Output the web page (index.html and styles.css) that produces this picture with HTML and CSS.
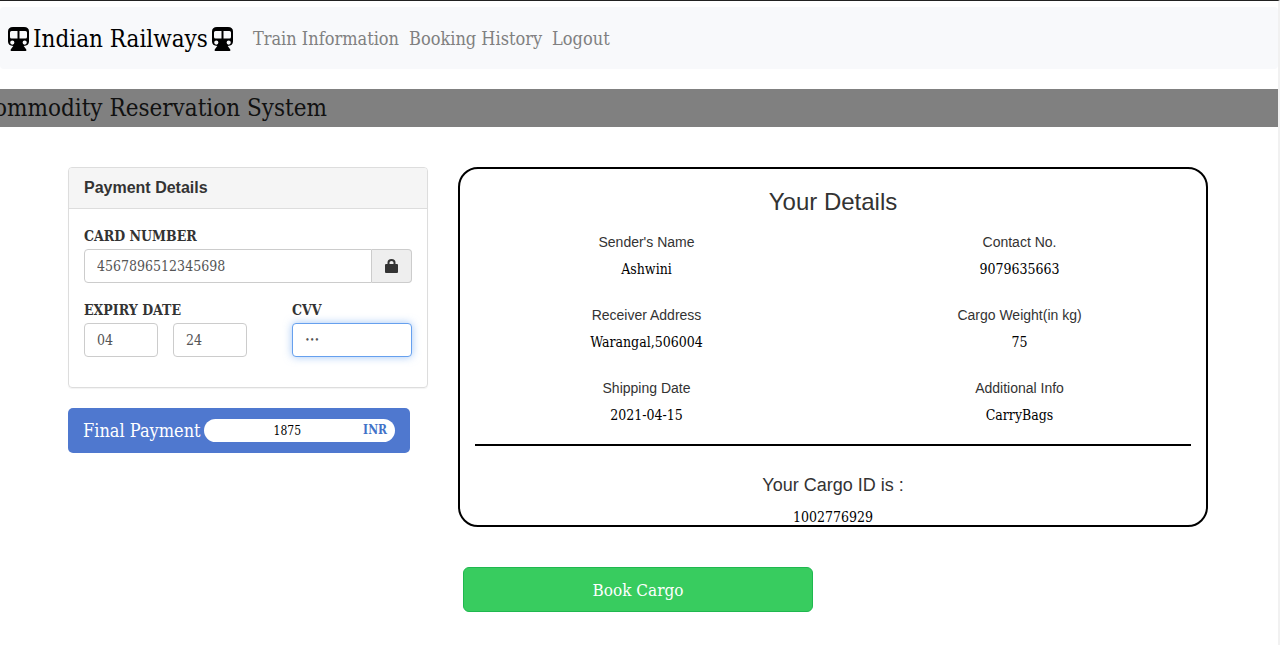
FILE: index.html
```html
<!DOCTYPE html>
<html lang="en">
<head>
<meta charset="utf-8">
<title>Indian Railways - Commodity Reservation</title>
<link rel="stylesheet" href="styles.css">
</head>
<body>
<svg class="sprite" aria-hidden="true">
  <symbol id="train" viewBox="0 0 21 24">
    <path fill-rule="evenodd" d="M5 0H16Q21 0 21 4.500V14.500Q21 18.600 15.700 19L18.300 22.500Q18.800 24 17.500 24H3.500Q2.200 24 2.700 22.500L5.300 19Q0 18.600 0 14.500V4.500Q0 0 5 0ZM3.500 4Q2 4 2 5.500V10Q2 11.500 3.500 11.500H9.500V4ZM11.500 4V11.500H17.500Q19 11.500 19 10V5.500Q19 4 17.500 4ZM4.300 13.500A2.100 2.100 0 1 0 4.300 17.700A2.100 2.100 0 1 0 4.300 13.500ZM16.700 13.500A2.100 2.100 0 1 0 16.700 17.700A2.100 2.100 0 1 0 16.700 13.500Z"/>
  </symbol>
</svg>
<nav class="navbar">
  <a class="brand" href="#"><svg class="train"><use href="#train"/></svg><span>Indian Railways</span><svg class="train"><use href="#train"/></svg></a>
  <div class="links">
    <a href="#">Train Information</a>
    <a href="#">Booking History</a>
    <a href="#">Logout</a>
  </div>
</nav>
<div class="banner"><div class="ticker"><span>Commodity Reservation System</span></div></div>
<main class="container">
  <div class="payment">
    <section class="panel">
      <h1 class="panel-title">Payment Details</h1>
      <form class="panel-body">
        <div class="field">
          <label for="card">CARD NUMBER</label>
          <div class="input-group">
            <input class="control" id="card" type="text" value="4567896512345698">
            <span class="addon"><svg class="lock" viewBox="0 0 13 14"><path fill-rule="evenodd" d="M2.500 5V3.500Q2.500 0 6.500 0Q10.500 0 10.500 3.500V5H12Q13 5 13 6V13Q13 14 12 14H1Q0 14 0 13V6Q0 5 1 5ZM4.500 5H8.500V3.500Q8.500 2 6.500 2Q4.500 2 4.500 3.500Z"/></svg></span>
          </div>
        </div>
        <div class="field-row">
          <div class="field">
            <label for="month">EXPIRY DATE</label>
            <div class="expiry">
              <input class="control" id="month" type="text" value="04">
              <input class="control" type="text" value="24" aria-label="Expiry year">
            </div>
          </div>
          <div class="field">
            <label for="cvv">CVV</label>
            <input class="control active" id="cvv" type="password" value="123">
          </div>
        </div>
      </form>
    </section>
    <div class="total">
      <label for="amount">Final Payment</label>
      <div class="badge"><input id="amount" type="text" value="1875" readonly><b>INR</b></div>
    </div>
  </div>
  <div class="summary">
    <section class="details">
      <h2>Your Details</h2>
      <dl class="facts">
        <div><dt>Sender's Name</dt><dd>Ashwini</dd></div>
        <div><dt>Contact No.</dt><dd>9079635663</dd></div>
        <div><dt>Receiver Address</dt><dd>Warangal,506004</dd></div>
        <div><dt>Cargo Weight(in kg)</dt><dd>75</dd></div>
        <div><dt>Shipping Date</dt><dd>2021-04-15</dd></div>
        <div><dt>Additional Info</dt><dd>CarryBags</dd></div>
      </dl>
      <hr>
      <h3>Your Cargo ID is :</h3>
      <p class="cargo-id">1002776929</p>
    </section>
    <button class="book" type="button">Book Cargo</button>
  </div>
</main>
</body>
</html>
```
FILE: styles.css
```css
* { box-sizing: border-box; }
:root { --slab: "DejaVu Serif Condensed", "DejaVu Serif", serif; }
body {
  margin: 0;
  min-height: 100vh;
  border-top: 1px solid #212121;
  border-right: 2px solid #f1f1f1;
  background: #fff;
  color: #333;
  font: 14px/20px "Liberation Sans", Arial, sans-serif;
}
h1, h2, h3, p, dl, dd { margin: 0; font-weight: 400; }
input, button { font-family: var(--slab); }
.sprite { display: none; }
.navbar {
  display: flex;
  align-items: center;
  gap: 20px;
  min-height: 62px;
  margin-top: 6px;
  padding: 2px 8px 0;
  border-radius: 4px;
  background: #f8f9fb;
  font-family: var(--slab);
}
.navbar a { text-decoration: none; white-space: nowrap; }
.brand { display: flex; align-items: center; gap: 4px; color: #000; font-size: 24px; line-height: 32px; }
.train { width: 21px; height: 24px; }
.links { display: flex; gap: 10px; font-size: 18px; line-height: 24px; }
.links a { color: #808080; }
.banner { margin-top: 20px; background: #808080; }
.ticker {
  display: flex;
  justify-content: flex-end;
  width: 327px;
  overflow: hidden;
  color: #111;
  font: 24px/38px var(--slab);
  white-space: nowrap;
}
.container {
  display: grid;
  grid-template-columns: 12fr 25fr;
  gap: 30px;
  max-width: 1172px;
  margin: 40px auto 0;
  padding: 0 17px 32px 15px;
}
.panel { border: 1px solid #ddd; border-radius: 4px; box-shadow: 0 1px 1px rgba(0, 0, 0, .05); }
.panel-title {
  padding: 10px 15px;
  border-bottom: 1px solid #ddd;
  border-radius: 3px 3px 0 0;
  background: #f5f5f5;
  font-size: 16px;
  font-weight: 700;
}
.panel-body { padding: 17px 15px 30px; }
.field label { display: block; margin-bottom: 3px; font: 700 14px/20px var(--slab); }
.field-row { display: grid; grid-template-columns: 163fr 120fr; gap: 45px; margin-top: 17px; }
.expiry { display: grid; grid-template-columns: 1fr 1fr; gap: 15px; }
.control {
  display: block;
  width: 100%;
  min-width: 0;
  height: 34px;
  padding: 6px 12px;
  border: 1px solid #ccc;
  border-radius: 4px;
  outline: 0;
  background: #fff;
  color: #555;
  font-size: 14px;
}
.active { border-color: #66a0ee; box-shadow: 0 0 8px rgba(102, 160, 238, .6); font-size: 9px; }
.input-group { display: flex; }
.input-group .control { border-radius: 4px 0 0 4px; }
.addon {
  display: flex;
  flex: 0 0 40px;
  align-items: center;
  justify-content: center;
  border: 1px solid #ccc;
  border-left: 0;
  border-radius: 0 4px 4px 0;
  background: #eee;
}
.lock { width: 13px; height: 14px; fill: #333; }
.total {
  display: flex;
  align-items: center;
  gap: 3px;
  width: 95%;
  min-height: 45px;
  margin-top: 20px;
  padding: 10px 15px;
  border-radius: 5px;
  background: #4f78cf;
  color: #fff;
  font: 17px/24px var(--slab);
  white-space: nowrap;
}
.total label { font-size: 18px; }
.badge { display: flex; flex: 1; align-items: center; min-width: 0; padding: 0 8px; border-radius: 12px; background: #fff; color: #4272c8; font-size: 12px; line-height: 23px; }
.badge input { flex: 1; min-width: 0; padding: 0; border: 0; outline: 0; background: none; color: #000; font-size: 12px; text-align: center; }
.details { border: 2px solid #000; border-radius: 20px; padding-top: 20px; text-align: center; }
.details h2 { font-size: 24px; line-height: 26px; }
.facts { display: grid; grid-template-columns: 1fr 1fr; row-gap: 26px; margin-top: 17px; }
.facts dd { margin-top: 7px; color: #000; font-family: var(--slab); }
.details hr { margin: 19px 15px 0; border: 0; border-top: 2px solid #000; }
.details h3 { margin-top: 29px; font-size: 18px; }
.cargo-id { margin-top: 14px; color: #000; font: 14px/16px var(--slab); }
.book {
  display: block;
  width: 350px;
  max-width: 100%;
  min-height: 45px;
  margin: 40px 0 0 5px;
  border: 1px solid #1fb84f;
  border-radius: 6px;
  background: #38cc5f;
  color: #fff;
  font-size: 17px;
}
```
